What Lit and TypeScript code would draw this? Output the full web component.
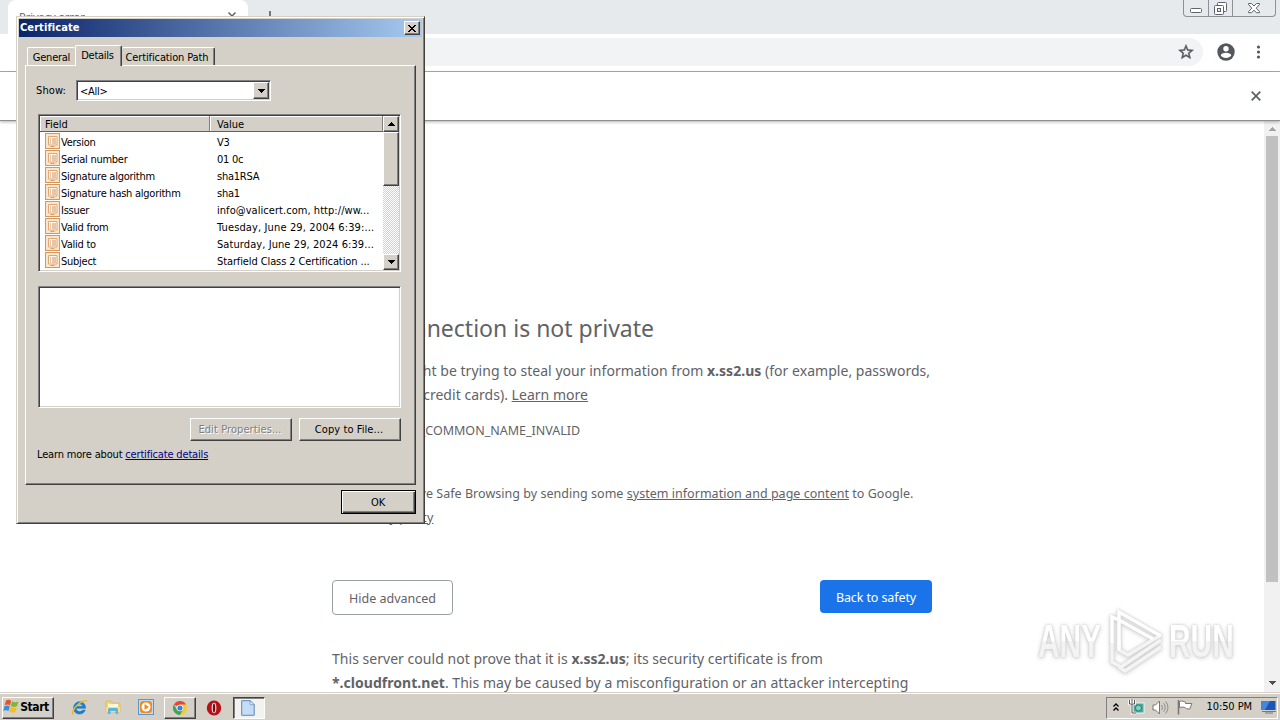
import { LitElement, html, css, svg } from "lit";
import { customElement } from "lit/decorators.js";
import { styleMap } from "lit/directives/style-map.js";

interface CertField {
  name: string;
  value: string;
  tracking: number;
}

const FIELDS: CertField[] = [
  { name: "Version", value: "V3", tracking: -0.25 },
  { name: "Serial number", value: "01 0c", tracking: -0.25 },
  { name: "Signature algorithm", value: "sha1RSA", tracking: -0.25 },
  { name: "Signature hash algorithm", value: "sha1", tracking: -0.25 },
  { name: "Issuer", value: "info@valicert.com, http://ww...", tracking: 0.05 },
  { name: "Valid from", value: "Tuesday, June 29, 2004 6:39:...", tracking: 0.13 },
  { name: "Valid to", value: "Saturday, June 29, 2024 6:39...", tracking: 0.08 },
  { name: "Subject", value: "Starfield Class 2 Certification ...", tracking: -0.11 },
];

const arrow = (dir: "up" | "down") => html`
  <svg width="7" height="4" viewBox="0 0 7 4" shape-rendering="crispEdges">
    <path d=${dir === "up" ? "M3 0h1v1h1v1h1v1h1v1H0V3h1V2h1V1h1z" : "M0 0h7v1H6v1H5v1H4v1H3V3H2V2H1V1H0z"} fill="currentColor" />
  </svg>
`;

@customElement("cert-dialog")
class CertDialog extends LitElement {
  static styles = css`
    :host {
      display: flex;
      flex-direction: column;
      box-sizing: border-box;
      width: 409px;
      height: 508px;
      padding: 1px;
      background: #d4d0c8;
      border: 1px solid;
      border-color: #d4d0c8 #404040 #404040 #d4d0c8;
      box-shadow: inset 1px 1px #fff, inset -1px -1px #808080;
      font: 11px/14px "DejaVu Sans Condensed", "DejaVu Sans", sans-serif;
      font-stretch: condensed;
      letter-spacing: -0.25px;
      color: #000;
      white-space: nowrap;
    }
    .title {
      display: flex;
      align-items: center;
      justify-content: space-between;
      height: 18px;
      margin: 1px 1px 0;
      padding: 0 2px 0 1px;
      background: linear-gradient(90deg, #0a246a, #a6caf0);
      color: #fff;
      font-weight: bold;
      letter-spacing: 0.08px;
    }
    .raised {
      background: #d4d0c8;
      box-sizing: border-box;
      border: 1px solid;
      border-color: #fff #404040 #404040 #fff;
      box-shadow: inset -1px -1px #808080;
      display: flex;
      align-items: center;
      justify-content: center;
      color: #000;
    }
    .close {
      width: 16px;
      height: 14px;
    }
    .tabs {
      display: flex;
      align-items: flex-end;
      height: 21px;
      margin: 7px 0 0 9px;
    }
    .tab {
      box-sizing: border-box;
      height: 18px;
      border: 1px solid;
      border-color: #fff #404040 transparent #fff;
      border-bottom: 0;
      border-radius: 2px 2px 0 0;
      box-shadow: inset -1px 0 #808080;
      text-align: center;
      line-height: 20px;
    }
    .general {
      width: 48px;
      border-right: 0;
      box-shadow: none;
    }
    .details {
      width: 47px;
      height: 21px;
      line-height: 19px;
      margin-bottom: -1px;
      padding-right: 2px;
      background: #d4d0c8;
      z-index: 1;
    }
    .path {
      width: 93px;
      border-left: 0;
      padding-right: 2px;
      letter-spacing: -0.13px;
    }
    .panel {
      box-sizing: border-box;
      width: 391px;
      height: 420px;
      margin-left: 7px;
      padding: 14px 14px 0 12px;
      border: 1px solid;
      border-color: #fff #404040 #404040 #fff;
      box-shadow: inset -1px -1px #808080;
      display: flex;
      flex-direction: column;
    }
    .show {
      display: flex;
      align-items: center;
      height: 21px;
    }
    .show > span {
      width: 40px;
      margin-left: -2px;
      letter-spacing: 0.1px;
    }
    .sunken {
      box-sizing: border-box;
      background: #fff;
      border: 1px solid;
      border-color: #808080 #fff #fff #808080;
      box-shadow: inset 1px 1px #404040, inset -1px -1px #d4d0c8;
    }
    .select {
      display: flex;
      align-items: center;
      justify-content: space-between;
      width: 195px;
      height: 21px;
      padding: 1px 1px 1px 3px;
    }
    .select span {
      padding-top: 2px;
    }
    .drop {
      width: 16px;
      height: 17px;
    }
    .button span {
      padding-top: 1px;
    }
    .list {
      display: flex;
      width: 363px;
      height: 158px;
      margin-top: 13px;
      padding: 1px;
    }
    .grid {
      flex: 1;
      overflow: hidden;
    }
    .head,
    .row {
      display: grid;
      grid-template-columns: 170px 1fr;
    }
    .head {
      grid-template-rows: 16px;
      height: 16px;
      margin-bottom: 1px;
    }
    .head div {
      box-sizing: border-box;
      height: 16px;
      background: #d4d0c8;
      border-right: 1px solid #808080;
      border-bottom: 1px solid #606060;
      box-shadow: inset 1px 1px #fff;
      padding-left: 5px;
      line-height: 18px;
      letter-spacing: 0;
    }
    .head div:last-child,
    .row .value {
      padding-left: 7px;
    }
    .row {
      height: 17px;
      line-height: 19px;
    }
    .name {
      display: flex;
      align-items: flex-start;
      height: 17px;
      padding-left: 5px;
      gap: 1px;
    }
    .scroll {
      width: 16px;
      display: flex;
      flex-direction: column;
      background: repeating-conic-gradient(#fff 0 25%, #d4d0c8 0 50%) 0 0 / 2px 2px;
    }
    .btn16 {
      height: 16px;
    }
    .thumb {
      height: 54px;
      margin-bottom: auto;
    }
    .detail {
      width: 363px;
      height: 122px;
      margin-top: 14px;
    }
    .buttons {
      display: flex;
      gap: 7px;
      margin: 10px 0 0 152px;
      letter-spacing: 0.08px;
    }
    .button {
      width: 102px;
      height: 23px;
      padding-right: 2px;
    }
    .disabled {
      color: #808080;
      text-shadow: 1px 1px #fff;
    }
    .learn {
      margin: 7px 0 0 -1px;
      letter-spacing: -0.17px;
    }
    .learn a {
      color: #00008b;
      text-decoration: underline;
    }
    .ok {
      width: 75px;
      height: 24px;
      margin: 5px 0 0 323px;
      padding: 1px 1px 0 0;
      border-color: #000;
      box-shadow: inset 1px 1px #fff, inset -1px -1px #404040, inset -2px -2px #808080;
    }
  `;

  private fieldIcon() {
    return html`<svg width="15" height="16" viewBox="0 0 15 16">
      <rect x=".5" y=".5" width="14" height="15" fill="#fbe6cc" stroke="#d6965f" />
      <path d="M3.500 3.500h8.500v8.500H3.500z" fill="#fff6ea" stroke="#e0a676" />
      <path d="M5 6h1m1 0h4M5 8h1m1 0h4M5 10h1m1 0h4" stroke="#cf9564" />
      <path d="M5.500 13.500h4" stroke="#d8a070" />
    </svg>`;
  }

  render() {
    return html`
      <div class="title">
        <span>Certificate</span>
        <div class="raised close">
          <svg width="8" height="7" viewBox="0 0 8 7" shape-rendering="crispEdges">
            <path d="M0 0h2v1h1v1h2V1h1V0h2v1H7v1H6v1H5v1h1v1h1v1h1v1H6V6H5V5H3v1H2v1H0V6h1V5h1V4h1V3H2V2H1V1H0z" />
          </svg>
        </div>
      </div>
      <div class="tabs">
        <div class="tab general">General</div>
        <div class="tab details">Details</div>
        <div class="tab path">Certification Path</div>
      </div>
      <div class="panel">
        <div class="show">
          <span>Show:</span>
          <div class="sunken select"><span>&lt;All&gt;</span><div class="raised drop">${arrow("down")}</div></div>
        </div>
        <div class="sunken list">
          <div class="grid">
            <div class="head"><div>Field</div><div>Value</div></div>
            ${FIELDS.map(
              (f) => html`<div class="row">
                <div class="name">${this.fieldIcon()}${f.name}</div>
                <div class="value" style=${styleMap({ letterSpacing: `${f.tracking}px` })}>${f.value}</div>
              </div>`
            )}
          </div>
          <div class="scroll">
            <div class="raised btn16">${arrow("up")}</div>
            <div class="raised thumb"></div>
            <div class="raised btn16">${arrow("down")}</div>
          </div>
        </div>
        <div class="sunken detail"></div>
        <div class="buttons">
          <div class="raised button disabled"><span>Edit Properties...</span></div>
          <div class="raised button"><span>Copy to File...</span></div>
        </div>
        <div class="learn">Learn more about <a>certificate details</a></div>
      </div>
      <div class="raised ok">OK</div>
    `;
  }
}

@customElement("task-bar")
class TaskBar extends LitElement {
  static styles = css`
    :host {
      display: flex;
      align-items: center;
      box-sizing: border-box;
      height: 28px;
      padding: 3px 2px 1px;
      background: #d4d0c8;
      border-top: 1px solid #d4d0c8;
      box-shadow: inset 0 1px #fff;
      font: 11px/14px "DejaVu Sans Condensed", "DejaVu Sans", sans-serif;
      letter-spacing: -0.25px;
      color: #000;
      white-space: nowrap;
    }
    svg {
      display: block;
    }
    .start,
    .running,
    .active {
      display: flex;
      align-items: center;
      justify-content: center;
      box-sizing: border-box;
      height: 22px;
      border: 1px solid;
      border-color: #fff #404040 #404040 #fff;
      box-shadow: inset -1px -1px #808080;
    }
    .start {
      width: 52px;
      padding: 0 4px 2px 0;
      font-weight: bold;
      font-size: 12px;
      letter-spacing: -0.4px;
    }
    .quick {
      display: flex;
      align-items: center;
      gap: 17px;
      margin: 0 10px 0 17px;
      padding-bottom: 1px;
    }
    .running {
      width: 32px;
    }
    .opera {
      margin: 0 11px 0 10px;
    }
    .active {
      width: 32px;
      padding-right: 2px;
      background: #f4f2ee;
      border-color: #404040 #fff #fff #404040;
      box-shadow: inset 1px 1px #808080;
    }
    .tray {
      display: flex;
      align-items: center;
      box-sizing: border-box;
      height: 22px;
      width: 172px;
      margin-left: auto;
      padding: 0 0 1px 6px;
      border: 1px solid;
      border-color: #808080 #fff #fff #808080;
    }
    .net {
      margin-left: 9px;
    }
    .vol {
      margin-left: 7px;
    }
    .flag {
      margin-left: 8px;
    }
    .clock {
      margin: 0 9px 0 auto;
      letter-spacing: -0.08px;
    }
  `;

  render() {
    return html`
      <div class="start">
        <svg width="17" height="17" viewBox="0 0 17 17">
          <path d="M3 2.500c2-1.200 3.600-1 5.200.2L7 7.500C5.300 6.400 3.600 6.300 1.700 7.300z" fill="#e8542a" />
          <path d="M9 3.200c2 1.200 4 1.300 6.500.2L14 8.300c-2.200 1-4.200.9-6.200-.3z" fill="#7db73a" />
          <path d="M1.500 8.200c2-1 3.600-.8 5.300.3L5.500 13c-1.700-1-3.300-1.100-5.200-.2z" fill="#3c8ed8" />
          <path d="M7.600 9c2 1.100 4 1.100 6.200.2l-1.400 4.700c-2.200 1-4.200.8-6.100-.4z" fill="#f8bd24" />
        </svg>
        <span>Start</span>
      </div>
      <div class="quick">
        <svg width="17" height="17" viewBox="0 0 17 17">
          <path d="M14.500 9.300H5.200c.2 2.200 1.600 3.200 3.500 3.200 1.500 0 2.300-.6 2.900-1.400h2.600c-.8 2.500-3 3.900-5.600 3.900-3.800 0-6-2.500-6-6s2.400-6.200 6-6.200 6 2.500 5.900 6.500zM5.300 7.300h6.300C11.300 5.600 10.200 4.900 8.500 4.900S5.600 5.800 5.300 7.300z" fill="#1e7ecb" stroke="#1e7ecb" stroke-width=".6" />
          <path d="M2.300 15.500c-1.800-1.300.5-6.500 4.500-10C11 2 15 .8 15.800 2.300" fill="none" stroke="#e9bb28" stroke-width="1.500" />
        </svg>
        <svg width="16" height="16" viewBox="0 0 16 16">
          <path d="M1 2h5l1 2h8v9H1z" fill="#f1d577" stroke="#d9b44c" stroke-width=".7" />
          <path d="M3 5h10v4H3z" fill="#fff7d2" />
          <path d="M1 8h14v5H1z" fill="#f5dd8b" />
          <path d="M3 15v-4c0-1.400.8-2 2-2h6c1.300 0 2 .6 2 2v4h-2.500v-3h-5v3z" fill="#57b5e4" />
        </svg>
        <svg width="16" height="16" viewBox="0 0 16 16">
          <rect x=".5" y=".5" width="15" height="15" fill="#bddcf5" stroke="#5797cc" />
          <rect x="2" y="2" width="12" height="12" rx="3" fill="#f28a1b" />
          <circle cx="8" cy="8" r="4.500" fill="#fff" />
          <path d="M6.500 5 11 8l-4.500 3z" fill="#f28a1b" />
        </svg>
      </div>
      <div class="running">
        <svg width="14" height="14" viewBox="0 0 14 14">
          <path d="M7 7 .9 3.500A7 7 0 0 1 13.100 3.500z" fill="#df4a3a" />
          <path d="M7 7V3.500h6.100A7 7 0 0 1 7 14z" fill="#f7cb2d" />
          <path d="M.9 3.500A7 7 0 0 0 7 14l3-5.200L4 8.700z" fill="#3da651" />
          <circle cx="7" cy="7" r="3.300" fill="#fff" />
          <circle cx="7" cy="7" r="2.600" fill="#3f7ddb" />
        </svg>
      </div>
      <svg class="opera" width="16" height="16" viewBox="0 0 16 16">
        <ellipse cx="8" cy="8" rx="7.200" ry="7.500" fill="#b81018" />
        <ellipse cx="8" cy="8" rx="2.400" ry="5.200" fill="#eee4df" />
        <ellipse cx="8" cy="8" rx="1.200" ry="4.500" fill="#7d080d" />
      </svg>
      <div class="active">
        <svg width="14" height="16" viewBox="0 0 14 16">
          <path d="M.7.700h8.500l4 4v10.600H.7z" fill="#c5dcf6" stroke="#5b86bd" />
          <path d="M9.200.700v4h4z" fill="#fff" stroke="#5b86bd" stroke-width=".7" />
        </svg>
      </div>
      <div class="tray">
        <svg width="6" height="9" viewBox="0 0 6 9">
          <path d="M.5 3.500 3 1l2.500 2.500M.5 7.500 3 5l2.500 2.500" fill="none" stroke="#000" stroke-width="1.300" />
        </svg>
        <svg class="net" width="17" height="16" viewBox="0 0 17 16">
          <rect x="5" y="4" width="11" height="10" fill="#49a9a0" stroke="#e8f4f2" />
          <circle cx="10.500" cy="9" r="3" fill="#8bd0b6" stroke="#267d78" />
          <path d="M1.500 1v4h5V1M4 0v4M4 5v9h4" fill="none" stroke="#fff" stroke-width="2.500" />
          <path d="M1.500 1v4h5V1M4 0v4M4 5v9h4" fill="none" stroke="#555" />
        </svg>
        <svg class="vol" width="17" height="15" viewBox="0 0 17 15">
          <path d="M1 5h2.500L7.500 1v13l-4-4H1z" fill="#fff" stroke="#777" />
          <path d="M9.500 5c1.200 1.500 1.200 3.500 0 5M11.500 3.200c2.200 2.500 2.200 6 0 8.500M13.500 1.500c3.200 3.500 3.200 8.500 0 12" fill="none" stroke="#888" />
        </svg>
        <svg class="flag" width="16" height="16" viewBox="0 0 16 16">
          <path d="M2.500 2.500c3-1.500 4 .3 6 .7v1.300h6.300l-2 5.500c-3 .3-4-.8-5-1.500-2-.6-3.500-.5-5.300.3z" fill="#fff" stroke="#777" />
          <path d="M1.500 1v14.500" stroke="#777" stroke-width="1.500" />
        </svg>
        <span class="clock">10:50 PM</span>
        <svg width="16" height="14" viewBox="0 0 16 14">
          <path d="M0 1h14.500v9H0z" fill="#1b55b5" />
          <path d="M0 1h9L4 10H0z" fill="#4287d8" />
          <path d="M1 11.500h14M4 13h8" stroke="#5f7e9f" />
        </svg>
      </div>
    `;
  }
}

@customElement("app-root")
class AppRoot extends LitElement {
  static styles = css`
    :host {
      display: flex;
      flex-direction: column;
      position: relative;
      width: 1280px;
      height: 720px;
      overflow: hidden;
      background: #fff;
      font-family: "Noto Sans", "Open Sans", sans-serif;
      color: #5f6368;
      white-space: nowrap;
    }
    svg {
      display: block;
    }
    .strip {
      display: flex;
      justify-content: space-between;
      height: 34px;
      padding-left: 8px;
      background: #e7eaed;
    }
    .left {
      display: flex;
      gap: 17px;
    }
    .tab {
      box-sizing: border-box;
      width: 240px;
      display: flex;
      justify-content: space-between;
      padding: 9px 11px 0;
      background: #fff;
      border-radius: 8px 8px 0 0;
      font-size: 11px;
      line-height: 16px;
    }
    .tab svg {
      margin-top: 2px;
    }
    .plus {
      margin-top: 11px;
    }
    .wins {
      display: flex;
      box-sizing: border-box;
      width: 93px;
      height: 17px;
      margin-right: 4px;
      border: 1px solid #8d9196;
      border-top: 0;
      border-radius: 0 0 4px 4px;
    }
    .wins div {
      box-sizing: border-box;
      display: flex;
      justify-content: center;
      align-items: center;
      width: 25px;
      border-right: 1px solid #8d9196;
    }
    .wins div:last-child {
      width: 42px;
      border: 0;
    }
    .toolbar {
      display: flex;
      align-items: center;
      box-sizing: border-box;
      height: 38px;
      padding: 0 12px 1px 80px;
      border-bottom: 1px solid #a9abad;
    }
    .omni {
      flex: 1;
      display: flex;
      align-items: center;
      justify-content: flex-end;
      box-sizing: border-box;
      height: 28px;
      padding-right: 8px;
      border-radius: 14px;
      background: #f1f3f4;
    }
    .user {
      margin: 0 14px 0 14px;
    }
    .infobar {
      display: flex;
      align-items: center;
      justify-content: flex-end;
      height: 48px;
      padding-right: 19px;
      border-bottom: 1px solid #8f8f8f;
      box-shadow: 0 1px 3px rgba(0, 0, 0, 0.3);
      z-index: 1;
    }
    .body {
      flex: 1;
      min-height: 0;
      display: flex;
    }
    .page {
      flex: 1;
      overflow: hidden;
    }
    .column {
      width: 600px;
      margin-left: 332px;
      padding-top: 191px;
    }
    .heading {
      margin: 0;
      font-size: 23px;
      line-height: 32px;
      font-weight: 400;
    }
    .text {
      margin: 15px 0 0;
      font-size: 14px;
      line-height: 24px;
      letter-spacing: 0.03px;
    }
    .code {
      margin-top: 14px;
      font-size: 12.500px;
      line-height: 20px;
    }
    .optin {
      display: flex;
      margin-top: 41px;
      font-size: 12.500px;
      line-height: 24px;
      letter-spacing: 0.03px;
    }
    .box {
      width: 13px;
      height: 13px;
      box-sizing: border-box;
      margin: 6px 9px 0 0;
      border: 1px solid #767676;
    }
    u {
      text-underline-offset: 1px;
    }
    .actions {
      display: flex;
      justify-content: space-between;
      align-items: flex-start;
      margin-top: 50px;
      font-size: 12.500px;
    }
    .hide,
    .back {
      box-sizing: border-box;
      text-align: center;
      border-radius: 4px;
    }
    .hide {
      width: 121px;
      height: 35px;
      line-height: 36px;
      border: 1px solid #9aa0a6;
    }
    .back {
      width: 112px;
      height: 33px;
      line-height: 36px;
      background: #1a73e8;
      color: #fff;
      letter-spacing: -0.1px;
    }
    .more {
      margin-top: 32px;
    }
    .vscroll {
      display: flex;
      flex-direction: column;
      justify-content: space-between;
      align-items: center;
      width: 16px;
      padding: 6px 0 7px;
      box-sizing: border-box;
      background: #f1f1f1;
      color: #505050;
    }
    .vscroll .faded {
      color: #a3a3a3;
      line-height: 0;
    }
    .vthumb {
      width: 12px;
      height: 446px;
      margin: 5px 0 auto;
      background: #c1c1c1;
    }
    .dialog {
      position: absolute;
      left: 16px;
      top: 16px;
      z-index: 2;
    }
    .mark {
      position: absolute;
      left: 1038px;
      top: 605px;
      display: flex;
      align-items: center;
      height: 72px;
      font: 700 46px/72px "Liberation Sans", sans-serif;
      filter: drop-shadow(0 0 1px #ccc) drop-shadow(0 1px 2px #d2d2d2);
    }
    .any,
    .run {
      transform-origin: left center;
      transform: scaleX(0.65);
      color: transparent;
      background: linear-gradient(#fff 50%, #f3f3f3 50%);
      background-clip: text;
      -webkit-background-clip: text;
    }
    .any {
      width: 96px;
      margin-right: -31px;
    }
    .run {
      width: 102px;
      margin-right: -38px;
    }
    .logo {
      margin: 0 2px 0 4px;
    }
  `;

  render() {
    return html`
      <div class="strip">
        <div class="left">
          <div class="tab">
            <span>Privacy error</span>
            <svg width="10" height="10" viewBox="0 0 10 10"><path d="m1.500 1.500 7 7m0-7-7 7" stroke="#5f6368" stroke-width="1.500" /></svg>
          </div>
          <svg class="plus" width="12" height="12" viewBox="0 0 12 12"><path d="M5 0v12M0 6h10" stroke="#5f6368" stroke-width="1.700" /></svg>
        </div>
        <div class="wins">
          <div><svg width="12" height="17" viewBox="0 0 12 17"><rect x=".5" y="8.500" width="11" height="4" rx="1" fill="#fff" stroke="#5d636c" /></svg></div>
          <div>
            <svg width="13" height="17" viewBox="0 0 13 17">
              <rect x="3.500" y="2.500" width="9" height="9" rx="1" fill="#fff" stroke="#5d636c" />
              <rect x=".5" y="5.500" width="9" height="9" rx="1" fill="#fff" stroke="#5d636c" />
              <rect x="3.500" y="8.500" width="3" height="3" fill="#e7eaed" stroke="#5d636c" />
            </svg>
          </div>
          <div>
            <svg width="12" height="17" viewBox="0 0 12 17">
              <path d="M.5 3.500h3L6 6l2.500-2.500h3v1L8.200 8.200l3.300 3.500v1h-3L6 10.300l-2.500 2.400h-3v-1l3.300-3.500L.5 4.500z" fill="#fff" stroke="#5d636c" />
            </svg>
          </div>
        </div>
      </div>
      <div class="toolbar">
        <div class="omni">
          <svg width="18" height="18" viewBox="0 0 24 24">
            <path d="m22 9.240-7.190-.62L12 2 9.190 8.630 2 9.240l5.460 4.730L5.820 21 12 17.270 18.180 21l-1.630-7.030zM12 15.400l-3.760 2.270 1-4.280-3.320-2.880 4.380-.38L12 6.100l1.710 4.040 4.380.38-3.320 2.880 1 4.280z" fill="#54585d" stroke="#54585d" stroke-width=".6" />
          </svg>
        </div>
        <svg class="user" width="18" height="18" viewBox="0 0 18 18">
          <circle cx="9" cy="9" r="8.700" fill="#54585d" />
          <circle cx="9" cy="5.800" r="2.700" fill="#fff" />
          <path d="M3.700 12.300c.4-3.400 10.200-3.400 10.600 0-2.200 3.700-8.400 3.700-10.600 0z" fill="#fff" />
        </svg>
        <svg width="19" height="16" viewBox="0 0 19 16">
          ${[3, 8, 13].map((y) => svg`<circle cx="9.500" cy=${y} r="1.600" fill="#54585d" />`)}
        </svg>
      </div>
      <div class="infobar">
        <svg width="10" height="10" viewBox="0 0 10 10"><path d="m.7.700 8.600 8.600m0-8.600L.7 9.300" stroke="#5f6368" stroke-width="1.800" /></svg>
      </div>
      <div class="body">
        <div class="page">
          <div class="column">
            <h1 class="heading">Your connection is not private</h1>
            <p class="text">
              Attackers might be trying to steal your information from <b>x.ss2.us</b> (for example, passwords,<br />
              messages, or credit cards). <u>Learn more</u>
            </p>
            <div class="code">NET::ERR_CERT_COMMON_NAME_INVALID</div>
            <div class="optin">
              <div class="box"></div>
              <div>Help improve Safe Browsing by sending some <u>system information and page content</u> to Google.<br /><u>Privacy policy</u></div>
            </div>
            <div class="actions">
              <div class="hide">Hide advanced</div>
              <div class="back">Back to safety</div>
            </div>
            <p class="text more">
              This server could not prove that it is <b>x.ss2.us</b>; its security certificate is from<br />
              <b>*.cloudfront.net</b>. This may be caused by a misconfiguration or an attacker intercepting
            </p>
          </div>
        </div>
        <div class="vscroll">
          <span class="faded">${arrow("up")}</span>
          <div class="vthumb"></div>
          ${arrow("down")}
        </div>
      </div>
      <task-bar></task-bar>
      <cert-dialog class="dialog"></cert-dialog>
      <div class="mark">
        <span class="any">ANY</span>
        <svg class="logo" width="60" height="64" viewBox="0 0 60 64" fill="none" stroke-width="3.500">
          <g stroke="#f4f4f4">
            <path d="M5 32v21l9 5 40-27M12 58l6 4 36-24" />
            <path d="M12 32v9l9 5 33-20" />
          </g>
          <path d="M12 41V3l42 24M12 11 5 8v26M12 11l34 19" stroke="#fff" />
        </svg>
        <span class="run">RUN</span>
      </div>
    `;
  }
}
